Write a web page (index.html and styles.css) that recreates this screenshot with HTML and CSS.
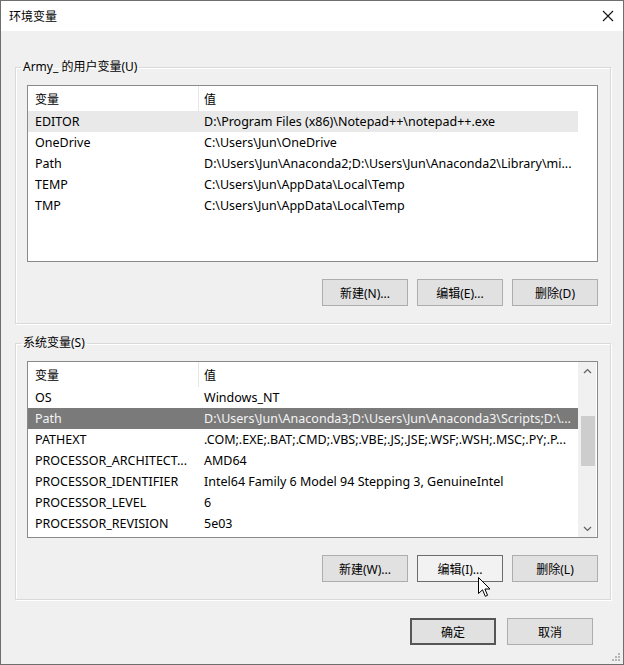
FILE: index.html
```html
<!DOCTYPE html>
<html lang="zh-CN">
<head>
    <meta charset="UTF-8">
    <title>环境变量</title>
    <link rel="stylesheet" href="styles.css">
</head>
<body>
    <div class="window">
        <div class="titlebar">
            <span class="title">环境变量</span>
            <svg class="close" width="12" height="12" viewBox="0 0 12 12">
                <path d="M1 1 L11 11 M11 1 L1 11" stroke="#111" stroke-width="1.1" fill="none"/>
            </svg>
        </div>

        <div class="content">
            <!-- User variables -->
            <fieldset class="group">
                <legend>Army_ 的用户变量(U)</legend>
                <div class="list">
                    <div class="list-main">
                        <div class="list-head">
                            <div class="head-name">变量</div>
                            <div class="head-value">值</div>
                        </div>
                        <div class="row hover"><div class="cell-name">EDITOR</div><div class="cell-value">D:\Program Files (x86)\Notepad++\notepad++.exe</div></div>
                        <div class="row"><div class="cell-name">OneDrive</div><div class="cell-value">C:\Users\Jun\OneDrive</div></div>
                        <div class="row"><div class="cell-name">Path</div><div class="cell-value">D:\Users\Jun\Anaconda2;D:\Users\Jun\Anaconda2\Library\mi...</div></div>
                        <div class="row"><div class="cell-name">TEMP</div><div class="cell-value">C:\Users\Jun\AppData\Local\Temp</div></div>
                        <div class="row"><div class="cell-name">TMP</div><div class="cell-value">C:\Users\Jun\AppData\Local\Temp</div></div>
                    </div>
                </div>
                <div class="actions">
                    <button class="btn">新建(N)...</button>
                    <button class="btn">编辑(E)...</button>
                    <button class="btn">删除(D)</button>
                </div>
            </fieldset>

            <!-- System variables -->
            <fieldset class="group">
                <legend>系统变量(S)</legend>
                <div class="list">
                    <div class="list-main">
                        <div class="list-head">
                            <div class="head-name">变量</div>
                            <div class="head-value">值</div>
                        </div>
                        <div class="row"><div class="cell-name">OS</div><div class="cell-value">Windows_NT</div></div>
                        <div class="row selected"><div class="cell-name">Path</div><div class="cell-value">D:\Users\Jun\Anaconda3;D:\Users\Jun\Anaconda3\Scripts;D:\...</div></div>
                        <div class="row"><div class="cell-name">PATHEXT</div><div class="cell-value">.COM;.EXE;.BAT;.CMD;.VBS;.VBE;.JS;.JSE;.WSF;.WSH;.MSC;.PY;.P...</div></div>
                        <div class="row"><div class="cell-name">PROCESSOR_ARCHITECT...</div><div class="cell-value">AMD64</div></div>
                        <div class="row"><div class="cell-name">PROCESSOR_IDENTIFIER</div><div class="cell-value">Intel64 Family 6 Model 94 Stepping 3, GenuineIntel</div></div>
                        <div class="row"><div class="cell-name">PROCESSOR_LEVEL</div><div class="cell-value">6</div></div>
                        <div class="row"><div class="cell-name">PROCESSOR_REVISION</div><div class="cell-value">5e03</div></div>
                    </div>
                    <div class="scrollbar">
                        <div class="arrow">
                            <svg width="9" height="6" viewBox="0 0 9 6"><path d="M1 5 L4.5 1.5 L8 5" stroke="#606060" stroke-width="1.2" fill="none"/></svg>
                        </div>
                        <div class="track"><div class="thumb"></div></div>
                        <div class="arrow">
                            <svg width="9" height="6" viewBox="0 0 9 6"><path d="M1 1 L4.5 4.5 L8 1" stroke="#606060" stroke-width="1.2" fill="none"/></svg>
                        </div>
                    </div>
                </div>
                <div class="actions">
                    <button class="btn">新建(W)...</button>
                    <button class="btn hot">编辑(I)...</button>
                    <button class="btn">删除(L)</button>
                </div>
            </fieldset>

            <div class="footer">
                <button class="btn default">确定</button>
                <button class="btn">取消</button>
            </div>
        </div>

        <svg class="grip" width="10" height="10" viewBox="0 0 10 10">
            <rect x="7" y="1" width="2" height="2" fill="#b5b5b5"/>
            <rect x="4" y="4" width="2" height="2" fill="#b5b5b5"/>
            <rect x="7" y="4" width="2" height="2" fill="#b5b5b5"/>
            <rect x="1" y="7" width="2" height="2" fill="#b5b5b5"/>
            <rect x="4" y="7" width="2" height="2" fill="#b5b5b5"/>
            <rect x="7" y="7" width="2" height="2" fill="#b5b5b5"/>
        </svg>

        <svg class="cursor" width="14" height="21" viewBox="0 0 14 21">
            <path d="M0.5 0.5 L0.5 16.5 L4.5 12.8 L7.3 19.3 L9.6 18.3 L6.9 12 L12 12 Z" fill="#fff" stroke="#000" stroke-width="1" stroke-linejoin="miter"/>
        </svg>
    </div>
</body>
</html>
```

FILE: styles.css
```css
* {
    box-sizing: border-box;
}

body {
    margin: 0;
    background: #fff;
    font-family: "Noto Sans", "Noto Sans CJK SC", sans-serif;
    font-size: 12px;
    color: #000;
}

.window {
    position: relative;
    width: 624px;
    height: 665px;
    border: 1px solid #6e6e6e;
    background: #f0f0f0;
    overflow: hidden;
}

.titlebar {
    height: 30px;
    background: #fff;
    display: flex;
    align-items: center;
    padding: 0 9px 0 8px;
}

.title {
    font-size: 12px;
    color: #000;
}

.close {
    margin-left: auto;
}

.content {
    padding: 28px 12px 0 14px;
}

.group {
    margin: 0;
    padding: 0 12px 17px 11px;
    border: 1px solid #d9d9d9;
    box-shadow: 1px 1px 0 #fff, inset 1px 1px 0 #fff;
    width: 596px;
    min-width: 0;
}

.group + .group {
    margin-top: 11px;
}

.group legend {
    margin-left: -6px;
    padding: 0 2px;
    line-height: 16px;
}

.list {
    margin-top: 10px;
    height: 177px;
    border: 1px solid #8a8a8a;
    background: #fff;
    display: flex;
    overflow: hidden;
}

.list-main {
    width: 550px;
    flex: none;
}

.list-head {
    display: flex;
    height: 25px;
    align-items: stretch;
}

.head-name {
    width: 171px;
    padding-left: 7px;
    border-right: 1px solid #e6e6e6;
    display: flex;
    align-items: center;
}

.head-value {
    flex: 1;
    padding-left: 5px;
    display: flex;
    align-items: center;
}

.row {
    display: flex;
    height: 21px;
    align-items: center;
    white-space: nowrap;
    font-size: 12.5px;
}

.row.hover {
    background: #e9e9e9;
}

.row.selected {
    background: #7a7a7a;
    color: #f4f4f4;
}

.cell-name {
    width: 170px;
    padding-left: 7px;
    overflow: hidden;
}

.cell-value {
    flex: 1;
    padding-left: 6px;
    overflow: hidden;
}

.scrollbar {
    width: 18px;
    flex: none;
    background: #f0f0f0;
    display: flex;
    flex-direction: column;
}

.arrow {
    height: 17px;
    display: flex;
    align-items: center;
    justify-content: center;
}

.track {
    flex: 1;
    padding: 37px 1px 0 3px;
}

.thumb {
    height: 50px;
    background: #cdcdcd;
}

.actions {
    display: flex;
    justify-content: flex-end;
    gap: 9px;
    margin-top: 17px;
}

.btn {
    width: 86px;
    height: 27px;
    padding: 0;
    border: 1px solid #adadad;
    background: #e1e1e1;
    font-family: inherit;
    font-size: 12px;
    color: #000;
}

.btn.hot {
    background: #f2f2f2;
    border-color: #6c6c6c;
}

.btn.default {
    border: 2px solid #565656;
}

.footer {
    display: flex;
    justify-content: flex-end;
    gap: 11px;
    margin-top: 18px;
    padding-right: 18px;
}

.grip {
    position: absolute;
    right: 2px;
    bottom: 2px;
}

.cursor {
    position: absolute;
    left: 477px;
    top: 576px;
}
```
